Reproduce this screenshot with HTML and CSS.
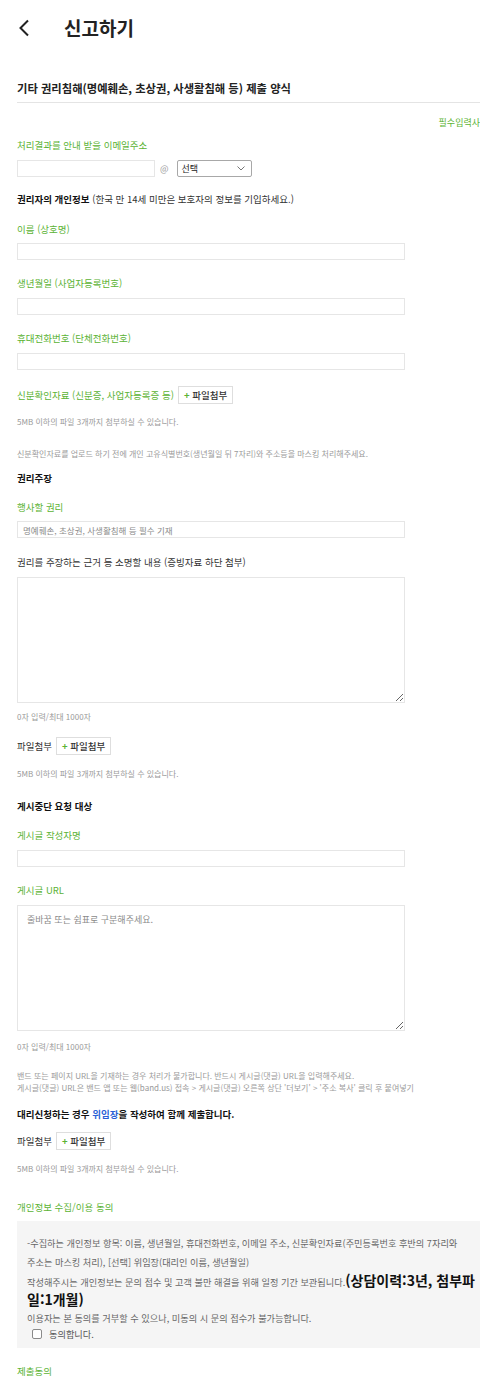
FILE: index.html
```html
<!DOCTYPE html>
<html lang="ko">
<head>
<meta charset="utf-8">
<title>신고하기</title>
<link rel="stylesheet" href="styles.css">
</head>
<body>
<header class="header">
  <svg class="back" width="12" height="18" viewBox="0 0 12 18"><path d="M10 1.5 L2.5 9 L10 16.5" fill="none" stroke="#222" stroke-width="2"/></svg>
  <h1 class="page-title">신고하기</h1>
</header>
<main class="form">
  <h2 class="form-title">기타 권리침해(명예훼손, 초상권, 사생활침해 등) 제출 양식</h2>
  <div class="required">필수입력사</div>

  <div class="label green m9">처리결과를 안내 받을 이메일주소</div>
  <div class="email-row m8">
    <input class="field email" type="text">
    <span class="at">@</span>
    <div class="select">
      <span>선택</span>
      <svg width="8" height="5" viewBox="0 0 8 5"><path d="M0.5 0.5 L4 4 L7.5 0.5" fill="none" stroke="#777" stroke-width="1"/></svg>
    </div>
  </div>

  <div class="label strong-line m15"><b>권리자의 개인정보</b> (한국 만 14세 미만은 보호자의 정보를 기입하세요.)</div>

  <div class="label green m16">이름 (상호명)</div>
  <input class="field wide m7" type="text">

  <div class="label green m16">생년월일 (사업자등록번호)</div>
  <input class="field wide m8" type="text">

  <div class="label green m16">휴대전화번호 (단체전화번호)</div>
  <input class="field wide m8" type="text">

  <div class="file-row m16">
    <span class="label green">신분확인자료 (신분증, 사업자등록증 등)</span>
    <button class="file-btn" type="button"><span class="plus">+</span> 파일첨부</button>
  </div>
  <div class="note m12">5MB 이하의 파일 3개까지 첨부하실 수 있습니다.</div>
  <div class="note m20">신분확인자료를 업로드 하기 전에 개인 고유식별번호(생년월일 뒤 7자리)와 주소등을 마스킹 처리해주세요.</div>

  <div class="section m11">권리주장</div>
  <div class="label green m15">행사할 권리</div>
  <input class="field wide m7" type="text" placeholder="명예훼손, 초상권, 사생활침해 등 필수 기재">

  <div class="label dark m17">권리를 주장하는 근거 등 소명할 내용 (증빙자료 하단 첨부)</div>
  <textarea class="area m8"></textarea>
  <div class="note m8">0자 입력/최대 1000자</div>

  <div class="file-row m14">
    <span class="label dark">파일첨부</span>
    <button class="file-btn" type="button"><span class="plus">+</span> 파일첨부</button>
  </div>
  <div class="note m13">5MB 이하의 파일 3개까지 첨부하실 수 있습니다.</div>

  <div class="section m19">게시중단 요청 대상</div>
  <div class="label green m15">게시글 작성자명</div>
  <input class="field wide m8" type="text">

  <div class="label green m16">게시글 URL</div>
  <textarea class="area m8" placeholder="줄바꿈 또는 쉼표로 구분해주세요."></textarea>
  <div class="note m10">0자 입력/최대 1000자</div>

  <div class="note m17">밴드 또는 페이지 URL을 기재하는 경우 처리가 불가합니다. 반드시 게시글(댓글) URL을 입력해주세요.<br>게시글(댓글) URL은 밴드 앱 또는 웹(band.us) 접속 &gt; 게시글(댓글) 오른쪽 상단 '더보기' &gt; '주소 복사' 클릭 후 붙여넣기</div>

  <div class="section m13">대리신청하는 경우 <span class="blue">위임장</span>을 작성하여 함께 제출합니다.</div>

  <div class="file-row m11">
    <span class="label dark">파일첨부</span>
    <button class="file-btn" type="button"><span class="plus">+</span> 파일첨부</button>
  </div>
  <div class="note m13">5MB 이하의 파일 3개까지 첨부하실 수 있습니다.</div>

  <div class="label green m25">개인정보 수집/이용 동의</div>
  <div class="agree-box m7">
    <p class="agree-p">-수집하는 개인정보 항목: 이름, 생년월일, 휴대전화번호, 이메일 주소, 신분확인자료(주민등록번호 후반의 7자리와<br>주소는 마스킹 처리), [선택] 위임장(대리인 이름, 생년월일)</p>
    <p class="agree-p tight">작성해주시는 개인정보는 문의 접수 및 고객 불만 해결을 위해 일정 기간 보관됩니다.<strong class="big">(상담이력:3년, 첨부파<br>일:1개월)</strong></p>
    <p class="agree-p tighter">이용자는 본 동의를 거부할 수 있으나, 미동의 시 문의 접수가 불가능합니다.</p>
    <label class="check-row"><span class="checkbox"></span>동의합니다.</label>
  </div>

  <div class="label green m16">제출동의</div>
</main>
</body>
</html>
```
FILE: styles.css
```css
* { box-sizing: border-box; }
html, body { margin: 0; padding: 0; background: #fff; }
body {
  font-family: "Noto Sans CJK KR", "Noto Sans", sans-serif;
  color: #333;
  width: 480px;
  overflow-x: hidden;
}
.header {
  height: 56px;
  display: flex;
  align-items: center;
  padding-left: 18px;
}
.back { display: block; }
.page-title {
  margin: 0 0 0 34px;
  font-size: 19px;
  font-weight: 700;
  color: #222;
  line-height: 24px;
}
.form { padding-left: 17px; }
.form-title {
  margin: 24px 0 0;
  font-size: 11.3px;
  font-weight: 700;
  color: #222;
  line-height: 16px;
  padding-bottom: 6px;
  border-bottom: 1px solid #e4e4e4;
}
.required {
  margin-top: 14px;
  text-align: right;
  font-size: 9px;
  line-height: 12px;
  color: #5bb334;
  white-space: nowrap;
}
.label { font-size: 9.5px; line-height: 14px; }
.green { color: #5bb334; }
.dark { color: #333; }
.strong-line { color: #333; }
.strong-line b { color: #111; font-weight: 700; }
.section {
  font-size: 9.5px;
  line-height: 14px;
  font-weight: 700;
  color: #111;
}
.blue { color: #2a5fd6; }
.note { font-size: 8px; line-height: 12px; color: #9a9a9a; }

.m7 { margin-top: 7px; }
.m8 { margin-top: 8px; }
.m9 { margin-top: 9px; }
.m10 { margin-top: 10px; }
.m11 { margin-top: 11px; }
.m12 { margin-top: 12px; }
.m13 { margin-top: 13px; }
.m14 { margin-top: 14px; }
.m15 { margin-top: 15px; }
.m16 { margin-top: 16px; }
.m17 { margin-top: 17px; }
.m19 { margin-top: 19px; }
.m20 { margin-top: 20px; }
.m25 { margin-top: 25px; }

.field {
  display: block;
  height: 17px;
  border: 1px solid #e6e6e6;
  border-radius: 0;
  padding: 0 5px;
  font-family: inherit;
  font-size: 8.5px;
  color: #333;
  background: #fff;
  outline: none;
  margin-left: 0;
  margin-right: 0;
  margin-bottom: 0;
}
.field::placeholder { color: #8a8a8a; }
.wide { width: 388px; }
.email-row { display: flex; align-items: center; height: 17px; }
.email { width: 138px; }
.at { font-size: 9px; color: #999; margin-left: 5px; margin-right: 8px; line-height: 17px; }
.select {
  width: 75px;
  height: 17px;
  border: 1px solid #a8a8a8;
  border-radius: 2px;
  display: flex;
  align-items: center;
  justify-content: space-between;
  padding: 0 6px 0 4px;
  font-size: 9px;
  color: #222;
}
.file-row { display: flex; align-items: center; height: 18px; gap: 4px; }
.file-btn {
  height: 18px;
  border: 1px solid #dedede;
  background: #fff;
  padding: 0 5px;
  font-family: inherit;
  font-size: 9.5px;
  font-weight: 500;
  color: #333;
  line-height: 16px;
  border-radius: 0;
}
.plus { color: #5bb334; font-weight: 700; }
.area {
  display: block;
  width: 388px;
  height: 126px;
  border: 1px solid #e6e6e6;
  border-radius: 0;
  padding: 7px 9px;
  font-family: inherit;
  font-size: 9px;
  color: #333;
  margin-left: 0;
  margin-right: 0;
  margin-bottom: 0;
  outline: none;
}
.area::placeholder { color: #8a8a8a; }
.agree-box {
  background: #f5f5f5;
  height: 127px;
  padding: 13px 2px 0 10px;
}
.agree-p {
  margin: 0;
  font-size: 9.2px;
  line-height: 19px;
  color: #666;
  word-break: break-all;
}
.agree-p.tight { line-height: 17px; }
.agree-p.tighter { line-height: 16px; }
.big { font-size: 14px; font-weight: 700; color: #111; line-height: 17px; }
.check-row {
  display: flex;
  align-items: center;
  font-size: 9.2px;
  line-height: 16px;
  color: #555;
  padding-left: 5px;
}
.checkbox {
  width: 10px;
  height: 10px;
  border: 1px solid #8a8a8a;
  border-radius: 2px;
  background: #fff;
  margin-right: 7px;
}
```
